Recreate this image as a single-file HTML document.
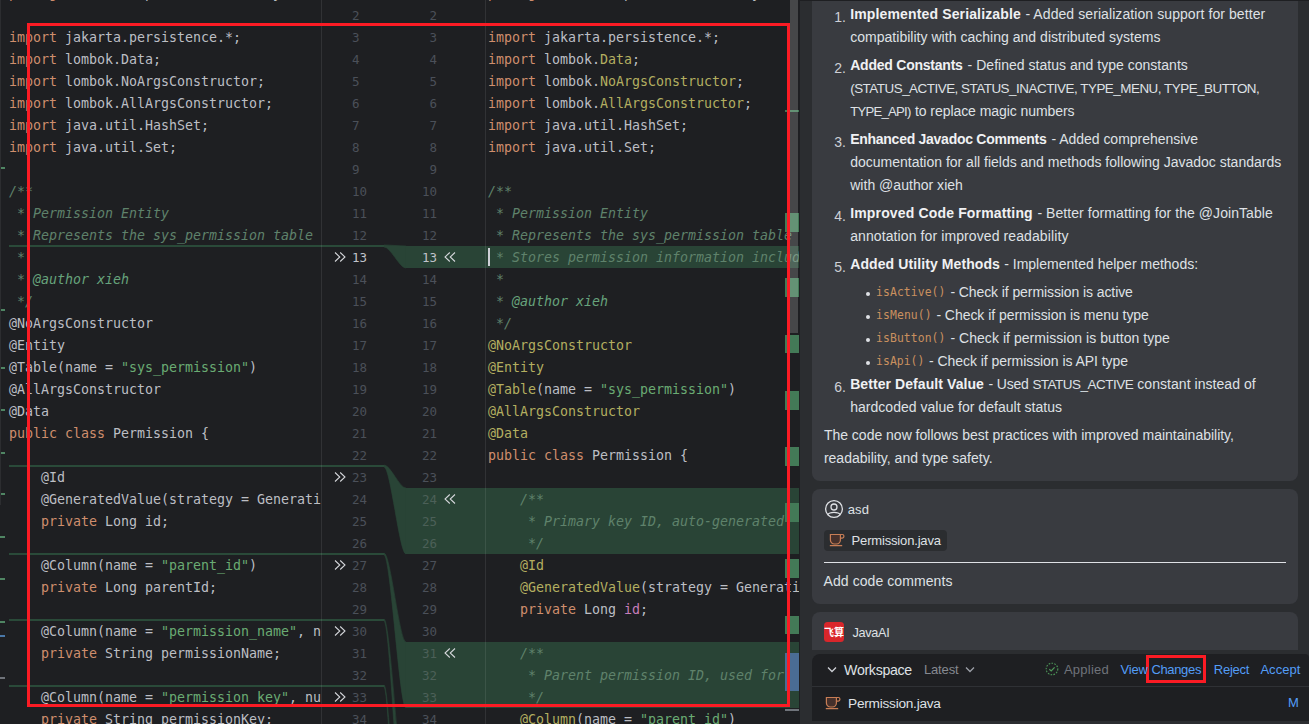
<!DOCTYPE html>
<html lang="en"><head><meta charset="utf-8"><title>Diff - Permission.java</title>
<style>
html,body{margin:0;padding:0}
body{width:1309px;height:724px;overflow:hidden;position:relative;background:#1e1f22;font-family:"Liberation Sans","Noto Sans CJK SC",sans-serif}
.abs{position:absolute}
.pane{position:absolute;top:0;height:724px;overflow:hidden}
.ln{position:absolute;left:0;height:22px;line-height:22px;margin-top:1px;white-space:pre;font-family:"DejaVu Sans Mono","Liberation Mono",monospace;font-size:13.3px;letter-spacing:-0.006px;color:#bcbec4}
.k{color:#cf8e6d}.s{color:#6aab73}.a{color:#b3ae60}.c{color:#5f826b;font-style:italic}.t{color:#67a37c;font-style:italic}.f{color:#c77dbb}
.hl{position:absolute;background:#294436}
.gl{position:absolute;height:2px;background:#2a4a39}
.num{position:absolute;height:22px;line-height:22px;margin-top:1px;font-family:"DejaVu Sans Mono","Liberation Mono",monospace;font-size:12.5px;color:#4b5059;text-align:right;width:40px}
.num.l{text-align:left}
.num.on{color:#c0c3cb}
.mk{position:absolute;left:785px;width:14px;background:#437a57}
.p{position:absolute;white-space:pre;color:#dfe1e5;font-size:14px;height:23px;line-height:23px}
.p b{font-weight:bold;color:#f0f1f3}
.code{font-family:"DejaVu Sans Mono","Liberation Mono",monospace;font-size:12px;color:#c98a5e}
.sg{position:absolute;white-space:pre;height:23px;line-height:23px;margin-top:1px}
.card{position:absolute;left:812px;width:486px;background:#393b40;border-radius:8px}
.lk{position:absolute;color:#589df6;font-size:13px;height:20px;line-height:20px;white-space:pre}
</style></head><body>

<div class="pane" style="left:0;width:321px">
<div class="gl" style="left:9px;top:245px;width:312px"></div>
<div class="gl" style="left:9px;top:465px;width:312px"></div>
<div class="gl" style="left:9px;top:553px;width:312px"></div>
<div class="gl" style="left:9px;top:619px;width:312px"></div>
<div class="gl" style="left:9px;top:685px;width:312px"></div>
<div class="ln" style="left:9px;top:-18px"><span class="k">package</span> com.xieh.permission.entity;</div>
<div class="ln" style="left:9px;top:26px"><span class="k">import</span> jakarta.persistence.*;</div>
<div class="ln" style="left:9px;top:48px"><span class="k">import</span> lombok.Data;</div>
<div class="ln" style="left:9px;top:70px"><span class="k">import</span> lombok.NoArgsConstructor;</div>
<div class="ln" style="left:9px;top:92px"><span class="k">import</span> lombok.AllArgsConstructor;</div>
<div class="ln" style="left:9px;top:114px"><span class="k">import</span> java.util.HashSet;</div>
<div class="ln" style="left:9px;top:136px"><span class="k">import</span> java.util.Set;</div>
<div class="ln" style="left:9px;top:180px"><span class="c">/**</span></div>
<div class="ln" style="left:9px;top:202px"><span class="c"> * Permission Entity</span></div>
<div class="ln" style="left:9px;top:224px"><span class="c"> * Represents the sys_permission table</span></div>
<div class="ln" style="left:9px;top:246px"><span class="c"> *</span></div>
<div class="ln" style="left:9px;top:268px"><span class="c"> * </span><span class="t">@author xieh</span></div>
<div class="ln" style="left:9px;top:290px"><span class="c"> */</span></div>
<div class="ln" style="left:9px;top:312px">@NoArgsConstructor</div>
<div class="ln" style="left:9px;top:334px">@Entity</div>
<div class="ln" style="left:9px;top:356px">@Table(name = <span class="s">&quot;sys_permission&quot;</span>)</div>
<div class="ln" style="left:9px;top:378px">@AllArgsConstructor</div>
<div class="ln" style="left:9px;top:400px">@Data</div>
<div class="ln" style="left:9px;top:422px"><span class="k">public class</span> Permission {</div>
<div class="ln" style="left:9px;top:466px">    @Id</div>
<div class="ln" style="left:9px;top:488px">    @GeneratedValue(strategy = GenerationType.IDENTITY)</div>
<div class="ln" style="left:9px;top:510px">    <span class="k">private</span> Long id;</div>
<div class="ln" style="left:9px;top:554px">    @Column(name = <span class="s">&quot;parent_id&quot;</span>)</div>
<div class="ln" style="left:9px;top:576px">    <span class="k">private</span> Long parentId;</div>
<div class="ln" style="left:9px;top:620px">    @Column(name = <span class="s">&quot;permission_name&quot;</span>, nullable = false)</div>
<div class="ln" style="left:9px;top:642px">    <span class="k">private</span> String permissionName;</div>
<div class="ln" style="left:9px;top:686px">    @Column(name = <span class="s">&quot;permission_key&quot;</span>, nullable = false)</div>
<div class="ln" style="left:9px;top:708px">    <span class="k">private</span> String permissionKey;</div>
<div class="abs" style="left:0;top:167px;width:5px;height:2px;background:#4f8563"></div>
<div class="abs" style="left:0;top:309px;width:5px;height:2px;background:#4f8563"></div>
<div class="abs" style="left:0;top:367px;width:5px;height:2px;background:#4f8563"></div>
<div class="abs" style="left:0;top:409px;width:5px;height:2px;background:#4f8563"></div>
<div class="abs" style="left:0;top:452px;width:5px;height:2px;background:#4f8563"></div>
<div class="abs" style="left:0;top:493px;width:5px;height:2px;background:#4f8563"></div>
<div class="abs" style="left:0;top:536px;width:5px;height:2px;background:#4f8563"></div>
<div class="abs" style="left:0;top:578px;width:5px;height:2px;background:#4f8563"></div>
<div class="abs" style="left:0;top:621px;width:5px;height:2px;background:#4f8563"></div>
<div class="abs" style="left:0;top:635px;width:5px;height:2px;background:#4a78a8"></div>
<div class="abs" style="left:0;top:677px;width:5px;height:2px;background:#6f737a"></div>
<div class="abs" style="left:0;top:0;width:1px;height:505px;background:#2c2d30"></div>
</div>
<div class="pane" style="left:321px;width:166px">
</div>
<svg class="abs" style="left:0;top:0" width="1309" height="724" viewBox="0 0 1309 724"><path d="M384,245 C390.6,245 399.4,246 406,246 L406,268 C399.4,268 390.6,247 384,247 Z" fill="#294436" stroke="#294436" stroke-width="0.6"/><path d="M384,465 C390.6,465 399.4,488 406,488 L406,554 C399.4,554 390.6,467 384,467 Z" fill="#294436" stroke="#294436" stroke-width="0.6"/><path d="M384,553 C390.6,553 399.4,642 406,642 L406,708 C399.4,708 390.6,555 384,555 Z" fill="#294436" stroke="#294436" stroke-width="0.6"/><path d="M384,619 C390.6,619 399.4,796 406,796 L406,862 C399.4,862 390.6,621 384,621 Z" fill="#294436" stroke="#294436" stroke-width="0.6"/><path d="M384,685 C390.6,685 399.4,950 406,950 L406,1016 C399.4,1016 390.6,687 384,687 Z" fill="#294436" stroke="#294436" stroke-width="0.6"/><rect x="321" y="245" width="63" height="2" fill="#2a4a39"/><rect x="321" y="465" width="63" height="2" fill="#2a4a39"/><rect x="321" y="553" width="63" height="2" fill="#2a4a39"/><rect x="321" y="619" width="63" height="2" fill="#2a4a39"/><rect x="321" y="685" width="63" height="2" fill="#2a4a39"/></svg>
<div class="hl" style="left:406px;top:246px;width:393px;height:22px"></div>
<div class="hl" style="left:406px;top:488px;width:393px;height:66px"></div>
<div class="hl" style="left:406px;top:642px;width:393px;height:66px"></div>
<div class="abs" style="left:321px;top:0;width:1px;height:724px;background:rgba(255,255,255,0.085)"></div>
<div class="abs" style="left:485px;top:0;width:1px;height:724px;background:rgba(255,255,255,0.085)"></div>
<div class="num l" style="left:352px;top:4px">2</div>
<div class="num" style="left:397px;top:4px">2</div>
<div class="num l" style="left:352px;top:26px">3</div>
<div class="num" style="left:397px;top:26px">3</div>
<div class="num l" style="left:352px;top:48px">4</div>
<div class="num" style="left:397px;top:48px">4</div>
<div class="num l" style="left:352px;top:70px">5</div>
<div class="num" style="left:397px;top:70px">5</div>
<div class="num l" style="left:352px;top:92px">6</div>
<div class="num" style="left:397px;top:92px">6</div>
<div class="num l" style="left:352px;top:114px">7</div>
<div class="num" style="left:397px;top:114px">7</div>
<div class="num l" style="left:352px;top:136px">8</div>
<div class="num" style="left:397px;top:136px">8</div>
<div class="num l" style="left:352px;top:158px">9</div>
<div class="num" style="left:397px;top:158px">9</div>
<div class="num l" style="left:352px;top:180px">10</div>
<div class="num" style="left:397px;top:180px">10</div>
<div class="num l" style="left:352px;top:202px">11</div>
<div class="num" style="left:397px;top:202px">11</div>
<div class="num l" style="left:352px;top:224px">12</div>
<div class="num" style="left:397px;top:224px">12</div>
<div class="num l on" style="left:352px;top:246px">13</div>
<div class="num on" style="left:397px;top:246px">13</div>
<div class="num l" style="left:352px;top:268px">14</div>
<div class="num" style="left:397px;top:268px">14</div>
<div class="num l" style="left:352px;top:290px">15</div>
<div class="num" style="left:397px;top:290px">15</div>
<div class="num l" style="left:352px;top:312px">16</div>
<div class="num" style="left:397px;top:312px">16</div>
<div class="num l" style="left:352px;top:334px">17</div>
<div class="num" style="left:397px;top:334px">17</div>
<div class="num l" style="left:352px;top:356px">18</div>
<div class="num" style="left:397px;top:356px">18</div>
<div class="num l" style="left:352px;top:378px">19</div>
<div class="num" style="left:397px;top:378px">19</div>
<div class="num l" style="left:352px;top:400px">20</div>
<div class="num" style="left:397px;top:400px">20</div>
<div class="num l" style="left:352px;top:422px">21</div>
<div class="num" style="left:397px;top:422px">21</div>
<div class="num l" style="left:352px;top:444px">22</div>
<div class="num" style="left:397px;top:444px">22</div>
<div class="num l" style="left:352px;top:466px">23</div>
<div class="num" style="left:397px;top:466px">23</div>
<div class="num l" style="left:352px;top:488px">24</div>
<div class="num" style="left:397px;top:488px;color:#4c6058">24</div>
<div class="num l" style="left:352px;top:510px">25</div>
<div class="num" style="left:397px;top:510px;color:#4c6058">25</div>
<div class="num l" style="left:352px;top:532px">26</div>
<div class="num" style="left:397px;top:532px;color:#4c6058">26</div>
<div class="num l" style="left:352px;top:554px">27</div>
<div class="num" style="left:397px;top:554px">27</div>
<div class="num l" style="left:352px;top:576px">28</div>
<div class="num" style="left:397px;top:576px">28</div>
<div class="num l" style="left:352px;top:598px">29</div>
<div class="num" style="left:397px;top:598px">29</div>
<div class="num l" style="left:352px;top:620px">30</div>
<div class="num" style="left:397px;top:620px">30</div>
<div class="num l" style="left:352px;top:642px">31</div>
<div class="num" style="left:397px;top:642px;color:#4c6058">31</div>
<div class="num l" style="left:352px;top:664px">32</div>
<div class="num" style="left:397px;top:664px;color:#4c6058">32</div>
<div class="num l" style="left:352px;top:686px">33</div>
<div class="num" style="left:397px;top:686px;color:#4c6058">33</div>
<div class="num l" style="left:352px;top:708px">34</div>
<div class="num" style="left:397px;top:708px">34</div>
<svg class="abs" style="left:334px;top:251px" width="12" height="12" viewBox="0 0 12 12"><path d="M1,1.5 L5.8,6 L1,10.5 M6.2,1.5 L11,6 L6.2,10.5" fill="none" stroke="#d5d7db" stroke-width="1.05"/></svg>
<svg class="abs" style="left:334px;top:471px" width="12" height="12" viewBox="0 0 12 12"><path d="M1,1.5 L5.8,6 L1,10.5 M6.2,1.5 L11,6 L6.2,10.5" fill="none" stroke="#d5d7db" stroke-width="1.05"/></svg>
<svg class="abs" style="left:334px;top:559px" width="12" height="12" viewBox="0 0 12 12"><path d="M1,1.5 L5.8,6 L1,10.5 M6.2,1.5 L11,6 L6.2,10.5" fill="none" stroke="#d5d7db" stroke-width="1.05"/></svg>
<svg class="abs" style="left:334px;top:625px" width="12" height="12" viewBox="0 0 12 12"><path d="M1,1.5 L5.8,6 L1,10.5 M6.2,1.5 L11,6 L6.2,10.5" fill="none" stroke="#d5d7db" stroke-width="1.05"/></svg>
<svg class="abs" style="left:334px;top:691px" width="12" height="12" viewBox="0 0 12 12"><path d="M1,1.5 L5.8,6 L1,10.5 M6.2,1.5 L11,6 L6.2,10.5" fill="none" stroke="#d5d7db" stroke-width="1.05"/></svg>
<svg class="abs" style="left:444px;top:251px" width="12" height="12" viewBox="0 0 12 12"><path d="M11,1.5 L6.2,6 L11,10.5 M5.8,1.5 L1,6 L5.8,10.5" fill="none" stroke="#d5d7db" stroke-width="1.05"/></svg>
<svg class="abs" style="left:444px;top:493px" width="12" height="12" viewBox="0 0 12 12"><path d="M11,1.5 L6.2,6 L11,10.5 M5.8,1.5 L1,6 L5.8,10.5" fill="none" stroke="#d5d7db" stroke-width="1.05"/></svg>
<svg class="abs" style="left:444px;top:647px" width="12" height="12" viewBox="0 0 12 12"><path d="M11,1.5 L6.2,6 L11,10.5 M5.8,1.5 L1,6 L5.8,10.5" fill="none" stroke="#d5d7db" stroke-width="1.05"/></svg>
<div class="pane" style="left:487px;width:312px">
<div class="ln" style="left:1px;top:-18px"><span class="k">package</span> com.xieh.permission.entity;</div>
<div class="ln" style="left:1px;top:26px"><span class="k">import</span> jakarta.persistence.*;</div>
<div class="ln" style="left:1px;top:48px"><span class="k">import</span> lombok.<span class="a">Data</span>;</div>
<div class="ln" style="left:1px;top:70px"><span class="k">import</span> lombok.<span class="a">NoArgsConstructor</span>;</div>
<div class="ln" style="left:1px;top:92px"><span class="k">import</span> lombok.<span class="a">AllArgsConstructor</span>;</div>
<div class="ln" style="left:1px;top:114px"><span class="k">import</span> java.util.HashSet;</div>
<div class="ln" style="left:1px;top:136px"><span class="k">import</span> java.util.Set;</div>
<div class="ln" style="left:1px;top:180px"><span class="c">/**</span></div>
<div class="ln" style="left:1px;top:202px"><span class="c"> * Permission Entity</span></div>
<div class="ln" style="left:1px;top:224px"><span class="c"> * Represents the sys_permission table</span></div>
<div class="ln" style="left:1px;top:246px"><span class="c"> * Stores permission information including hierarchy</span></div>
<div class="ln" style="left:1px;top:268px"><span class="c"> *</span></div>
<div class="ln" style="left:1px;top:290px"><span class="c"> * </span><span class="t">@author xieh</span></div>
<div class="ln" style="left:1px;top:312px"><span class="c"> */</span></div>
<div class="ln" style="left:1px;top:334px"><span class="a">@NoArgsConstructor</span></div>
<div class="ln" style="left:1px;top:356px"><span class="a">@Entity</span></div>
<div class="ln" style="left:1px;top:378px"><span class="a">@Table</span>(name = <span class="s">&quot;sys_permission&quot;</span>)</div>
<div class="ln" style="left:1px;top:400px"><span class="a">@AllArgsConstructor</span></div>
<div class="ln" style="left:1px;top:422px"><span class="a">@Data</span></div>
<div class="ln" style="left:1px;top:444px"><span class="k">public class</span> Permission {</div>
<div class="ln" style="left:1px;top:488px"><span class="c">    /**</span></div>
<div class="ln" style="left:1px;top:510px"><span class="c">     * Primary key ID, auto-generated</span></div>
<div class="ln" style="left:1px;top:532px"><span class="c">     */</span></div>
<div class="ln" style="left:1px;top:554px">    <span class="a">@Id</span></div>
<div class="ln" style="left:1px;top:576px">    <span class="a">@GeneratedValue</span>(strategy = GenerationType.IDENTITY)</div>
<div class="ln" style="left:1px;top:598px">    <span class="k">private</span> Long <span class="f">id</span>;</div>
<div class="ln" style="left:1px;top:642px"><span class="c">    /**</span></div>
<div class="ln" style="left:1px;top:664px"><span class="c">     * Parent permission ID, used for hierarchy</span></div>
<div class="ln" style="left:1px;top:686px"><span class="c">     */</span></div>
<div class="ln" style="left:1px;top:708px">    <span class="a">@Column</span>(name = <span class="s">&quot;parent_id&quot;</span>)</div>
<div class="abs" style="left:1px;top:248px;width:2px;height:18px;background:#ced0d6"></div>
</div>
<div class="mk" style="top:110px;height:2px"></div>
<div class="mk" style="top:213px;height:19px"></div>
<div class="mk" style="top:278px;height:19px"></div>
<div class="mk" style="top:335px;height:18px"></div>
<div class="mk" style="top:391px;height:19px"></div>
<div class="mk" style="top:447px;height:19px"></div>
<div class="mk" style="top:503px;height:19px"></div>
<div class="mk" style="top:559px;height:19px"></div>
<div class="mk" style="top:616px;height:18px"></div>
<div class="mk" style="top:653px;height:38px;background:#4a6c94"></div>
<div class="abs" style="left:785px;top:709px;width:14px;height:2px;background:#6f737a"></div>
<div class="abs" style="left:790px;top:0;width:8px;height:333px;background:rgba(255,255,255,0.18)"></div>
<div class="abs" style="left:27px;top:23px;width:757px;height:678px;border:3px solid #fb1b24"></div>
<div class="abs" style="left:799px;top:0;width:510px;height:724px;background:#1e1f22"></div>
<div class="abs" style="left:800px;top:1px;width:509px;height:723px;background:#2b2d30"></div>
<div class="card" style="top:-20px;height:501px"></div>
<div class="abs" style="left:800px;top:0;width:509px;height:1px;background:#1e1f22"></div>
<div class="card" style="top:489px;height:115px"></div>
<div class="card" style="top:612px;height:38px;border-radius:8px 8px 0 0"></div>
<div class="abs" style="left:866px;top:292px;width:4px;height:4px;border-radius:2px;background:#dfe1e5"></div>
<div class="abs" style="left:866px;top:315px;width:4px;height:4px;border-radius:2px;background:#dfe1e5"></div>
<div class="abs" style="left:866px;top:338px;width:4px;height:4px;border-radius:2px;background:#dfe1e5"></div>
<div class="abs" style="left:866px;top:361px;width:4px;height:4px;border-radius:2px;background:#dfe1e5"></div>
<span class="sg" style="left:834.2px;top:5px;font-family:'Liberation Sans',sans-serif;font-size:14px;color:#ced0d6;letter-spacing:0.013px">1.</span>
<span class="sg" style="left:850.2px;top:2px;font-family:'Liberation Sans',sans-serif;font-size:14px;font-weight:bold;color:#f0f1f3;letter-spacing:0.144px">Implemented Serializable</span>
<span class="sg" style="left:1025.4px;top:2px;font-family:'Liberation Sans',sans-serif;font-size:14px;color:#dfe1e5;letter-spacing:0.083px">- Added serialization support for better</span>
<span class="sg" style="left:850.2px;top:25px;font-family:'Liberation Sans',sans-serif;font-size:14px;color:#dfe1e5;letter-spacing:0.026px">compatibility with caching and distributed systems</span>
<span class="sg" style="left:834.2px;top:56px;font-family:'Liberation Sans',sans-serif;font-size:14px;color:#ced0d6;letter-spacing:0.013px">2.</span>
<span class="sg" style="left:850.2px;top:53px;font-family:'Liberation Sans',sans-serif;font-size:14px;font-weight:bold;color:#f0f1f3;letter-spacing:-0.228px">Added Constants</span>
<span class="sg" style="left:967.6px;top:53px;font-family:'Liberation Sans',sans-serif;font-size:14px;color:#dfe1e5;letter-spacing:0.022px">- Defined status and type constants</span>
<span class="sg" style="left:850.2px;top:76px;font-family:'Liberation Sans',sans-serif;font-size:13.42px;color:#dfe1e5;letter-spacing:-0.486px">(STATUS_ACTIVE, STATUS_INACTIVE, TYPE_MENU, TYPE_BUTTON,</span>
<span class="sg" style="left:850.2px;top:99px;font-family:'Liberation Sans',sans-serif;font-size:13.15px;color:#dfe1e5;letter-spacing:-0.755px">TYPE_API)</span>
<span class="sg" style="left:915.0px;top:99px;font-family:'Liberation Sans',sans-serif;font-size:14px;color:#dfe1e5;letter-spacing:-0.064px">to replace magic numbers</span>
<span class="sg" style="left:834.2px;top:130px;font-family:'Liberation Sans',sans-serif;font-size:14px;color:#ced0d6;letter-spacing:0.013px">3.</span>
<span class="sg" style="left:850.2px;top:127px;font-family:'Liberation Sans',sans-serif;font-size:14px;font-weight:bold;color:#f0f1f3;letter-spacing:-0.269px">Enhanced Javadoc Comments</span>
<span class="sg" style="left:1051.4px;top:127px;font-family:'Liberation Sans',sans-serif;font-size:14px;color:#dfe1e5;letter-spacing:-0.020px">- Added comprehensive</span>
<span class="sg" style="left:850.2px;top:150px;font-family:'Liberation Sans',sans-serif;font-size:14px;color:#dfe1e5;letter-spacing:-0.002px">documentation for all fields and methods following Javadoc standards</span>
<span class="sg" style="left:850.2px;top:173px;font-family:'Liberation Sans',sans-serif;font-size:14px;color:#dfe1e5;letter-spacing:0.026px">with @author xieh</span>
<span class="sg" style="left:834.2px;top:204px;font-family:'Liberation Sans',sans-serif;font-size:14px;color:#ced0d6;letter-spacing:0.013px">4.</span>
<span class="sg" style="left:850.2px;top:201px;font-family:'Liberation Sans',sans-serif;font-size:14px;font-weight:bold;color:#f0f1f3;letter-spacing:0.156px">Improved Code Formatting</span>
<span class="sg" style="left:1037.4px;top:201px;font-family:'Liberation Sans',sans-serif;font-size:14px;color:#dfe1e5;letter-spacing:0.068px">- Better formatting for the @JoinTable</span>
<span class="sg" style="left:850.2px;top:224px;font-family:'Liberation Sans',sans-serif;font-size:14px;color:#dfe1e5;letter-spacing:0.100px">annotation for improved readability</span>
<span class="sg" style="left:834.2px;top:255px;font-family:'Liberation Sans',sans-serif;font-size:14px;color:#ced0d6;letter-spacing:0.013px">5.</span>
<span class="sg" style="left:850.2px;top:252px;font-family:'Liberation Sans',sans-serif;font-size:14px;font-weight:bold;color:#f0f1f3;letter-spacing:0.096px">Added Utility Methods</span>
<span class="sg" style="left:1004.2px;top:252px;font-family:'Liberation Sans',sans-serif;font-size:14px;color:#dfe1e5;letter-spacing:0.005px">- Implemented helper methods:</span>
<span class="sg" style="left:876.1px;top:280px;font-family:'DejaVu Sans Mono','Liberation Mono',monospace;font-size:11.4px;color:#c9905f;letter-spacing:0.080px">isActive()</span>
<span class="sg" style="left:950.4px;top:280px;font-family:'Liberation Sans',sans-serif;font-size:14px;color:#dfe1e5;letter-spacing:-0.089px">- Check if permission is active</span>
<span class="sg" style="left:876.1px;top:303px;font-family:'DejaVu Sans Mono','Liberation Mono',monospace;font-size:11.4px;color:#c9905f;letter-spacing:0.089px">isMenu()</span>
<span class="sg" style="left:936.4px;top:303px;font-family:'Liberation Sans',sans-serif;font-size:14px;color:#dfe1e5;letter-spacing:-0.045px">- Check if permission is menu type</span>
<span class="sg" style="left:876.1px;top:326px;font-family:'DejaVu Sans Mono','Liberation Mono',monospace;font-size:11.4px;color:#c9905f;letter-spacing:0.080px">isButton()</span>
<span class="sg" style="left:950.4px;top:326px;font-family:'Liberation Sans',sans-serif;font-size:14px;color:#dfe1e5;letter-spacing:0.046px">- Check if permission is button type</span>
<span class="sg" style="left:876.1px;top:349px;font-family:'DejaVu Sans Mono','Liberation Mono',monospace;font-size:11.4px;color:#c9905f;letter-spacing:0.047px">isApi()</span>
<span class="sg" style="left:929.1px;top:349px;font-family:'Liberation Sans',sans-serif;font-size:14px;color:#dfe1e5;letter-spacing:-0.058px">- Check if permission is API type</span>
<span class="sg" style="left:834.2px;top:375px;font-family:'Liberation Sans',sans-serif;font-size:14px;color:#ced0d6;letter-spacing:0.013px">6.</span>
<span class="sg" style="left:850.2px;top:372px;font-family:'Liberation Sans',sans-serif;font-size:14px;font-weight:bold;color:#f0f1f3;letter-spacing:0.075px">Better Default Value</span>
<span class="sg" style="left:988.6px;top:372px;font-family:'Liberation Sans',sans-serif;font-size:14px;color:#dfe1e5;letter-spacing:-0.187px">- Used</span>
<span class="sg" style="left:1032.4px;top:372px;font-family:'Liberation Sans',sans-serif;font-size:13.47px;color:#dfe1e5;letter-spacing:-0.501px">STATUS_ACTIVE</span>
<span class="sg" style="left:1137.3px;top:372px;font-family:'Liberation Sans',sans-serif;font-size:14px;color:#dfe1e5;letter-spacing:0.048px">constant instead of</span>
<span class="sg" style="left:850.2px;top:395px;font-family:'Liberation Sans',sans-serif;font-size:14px;color:#dfe1e5;letter-spacing:0.027px">hardcoded value for default status</span>
<span class="sg" style="left:823.9px;top:423px;font-family:'Liberation Sans',sans-serif;font-size:14px;color:#dfe1e5;letter-spacing:-0.008px">The code now follows best practices with improved maintainability,</span>
<span class="sg" style="left:823.9px;top:446px;font-family:'Liberation Sans',sans-serif;font-size:14px;color:#dfe1e5;letter-spacing:0.012px">readability, and type safety.</span>
<svg class="abs" style="left:824px;top:499px" width="20" height="20" viewBox="0 0 20 20"><circle cx="10" cy="10" r="8.4" fill="none" stroke="#dfe1e5" stroke-width="1.3"/><circle cx="10" cy="8" r="3" fill="none" stroke="#dfe1e5" stroke-width="1.3"/><path d="M3.8,15.6 C5.5,12.6 14.5,12.6 16.2,15.6" fill="none" stroke="#dfe1e5" stroke-width="1.3"/></svg>
<div class="abs" style="left:824px;top:530px;width:123px;height:21px;background:#2b2d30;border-radius:4px"></div>
<svg class="abs" style="left:829px;top:533px" width="16" height="14" viewBox="0 0 16 14"><path d="M1.4,1.5 H11.4 V7 a4,4 0 0 1 -4,4 h-2 a4,4 0 0 1 -4,-4 Z" fill="#45302b" stroke="#c77d55" stroke-width="1.2"/><path d="M11.4,1.5 h2 a1.5,1.5 0 0 1 1.5,1.5 v0.3 a1.8,1.8 0 0 1 -1.8,1.8 h-1.7" fill="none" stroke="#c77d55" stroke-width="1.2"/><path d="M0.8,12.6 H13.2" stroke="#c77d55" stroke-width="1.3"/></svg>
<div class="abs" style="left:824px;top:562px;width:462px;height:1px;background:#dfe1e5"></div>
<div class="abs" style="left:824px;top:622px;width:20px;height:20px;border-radius:3.5px;background:#d9262b;color:#fff;font-size:10px;line-height:22px;text-align:center;font-weight:bold;letter-spacing:0;overflow:hidden;white-space:nowrap">飞算</div>
<div class="abs" style="left:812px;top:654px;width:497px;height:67px;background:#1e1f22;border-radius:8px 4px 0 0"></div>
<div class="abs" style="left:812px;top:686px;width:497px;height:1px;background:#2f3135"></div>
<svg class="abs" style="left:827px;top:666px" width="10" height="8" viewBox="0 0 10 8"><path d="M1,1.5 L5,5.5 L9,1.5" fill="none" stroke="#ced0d6" stroke-width="1.3"/></svg>
<svg class="abs" style="left:965px;top:666px" width="10" height="8" viewBox="0 0 10 8"><path d="M1,1.5 L5,5.5 L9,1.5" fill="none" stroke="#9da0a8" stroke-width="1.3"/></svg>
<svg class="abs" style="left:1045px;top:662px" width="14" height="14" viewBox="0 0 14 14"><circle cx="7" cy="7" r="5.8" fill="none" stroke="#4e9a5a" stroke-width="1.1" stroke-dasharray="1.6 1.3"/><path d="M4.3,7.2 L6.2,9 L9.6,5.3" fill="none" stroke="#4e9a5a" stroke-width="1.2"/></svg>
<div class="abs" style="left:1146px;top:655px;width:54px;height:22px;border:3px solid #fb1b24;background:#1e1f22"></div>
<svg class="abs" style="left:825px;top:696px" width="16" height="14" viewBox="0 0 16 14"><path d="M1.4,1.5 H11.4 V7 a4,4 0 0 1 -4,4 h-2 a4,4 0 0 1 -4,-4 Z" fill="#45302b" stroke="#c77d55" stroke-width="1.2"/><path d="M11.4,1.5 h2 a1.5,1.5 0 0 1 1.5,1.5 v0.3 a1.8,1.8 0 0 1 -1.8,1.8 h-1.7" fill="none" stroke="#c77d55" stroke-width="1.2"/><path d="M0.8,12.6 H13.2" stroke="#c77d55" stroke-width="1.3"/></svg>
<span class="sg" style="left:847.7px;top:497px;font-family:'Liberation Sans',sans-serif;font-size:13px;color:#dfe1e5;letter-spacing:0.166px">asd</span>
<span class="sg" style="left:851.6px;top:528px;font-family:'Liberation Sans',sans-serif;font-size:13px;color:#dfe1e5;letter-spacing:-0.169px">Permission.java</span>
<span class="sg" style="left:823.6px;top:569px;font-family:'Liberation Sans',sans-serif;font-size:14px;color:#dfe1e5;letter-spacing:0.073px">Add code comments</span>
<span class="sg" style="left:852.4px;top:621px;font-family:'Liberation Sans',sans-serif;font-size:12.69px;color:#dfe1e5;letter-spacing:-0.279px">JavaAI</span>
<span class="sg" style="left:844.1px;top:658px;font-family:'Liberation Sans',sans-serif;font-size:14.16px;color:#dfe1e5;letter-spacing:-0.309px">Workspace</span>
<span class="sg" style="left:923.9px;top:657px;font-family:'Liberation Sans',sans-serif;font-size:13px;color:#868a91;letter-spacing:-0.124px">Latest</span>
<span class="sg" style="left:1063.9px;top:657px;font-family:'Liberation Sans',sans-serif;font-size:13px;color:#6f737a;letter-spacing:0.254px">Applied</span>
<span class="sg" style="left:1120.6px;top:657px;font-family:'Liberation Sans',sans-serif;font-size:13px;color:#539df7;letter-spacing:-0.218px">View</span>
<span class="sg" style="left:1151.4px;top:657px;font-family:'Liberation Sans',sans-serif;font-size:13px;color:#539df7;letter-spacing:-0.341px">Changes</span>
<span class="sg" style="left:1213.8px;top:657px;font-family:'Liberation Sans',sans-serif;font-size:13px;color:#539df7;letter-spacing:-0.252px">Reject</span>
<span class="sg" style="left:1260.4px;top:657px;font-family:'Liberation Sans',sans-serif;font-size:13px;color:#539df7;letter-spacing:0.050px">Accept</span>
<span class="sg" style="left:848.1px;top:691px;font-family:'Liberation Sans',sans-serif;font-size:13.66px;color:#dfe1e5;letter-spacing:-0.251px">Permission.java</span>
<span class="sg" style="left:1287.9px;top:690px;font-family:'Liberation Sans',sans-serif;font-size:13px;color:#539df7;letter-spacing:0.656px">M</span>
</body></html>
